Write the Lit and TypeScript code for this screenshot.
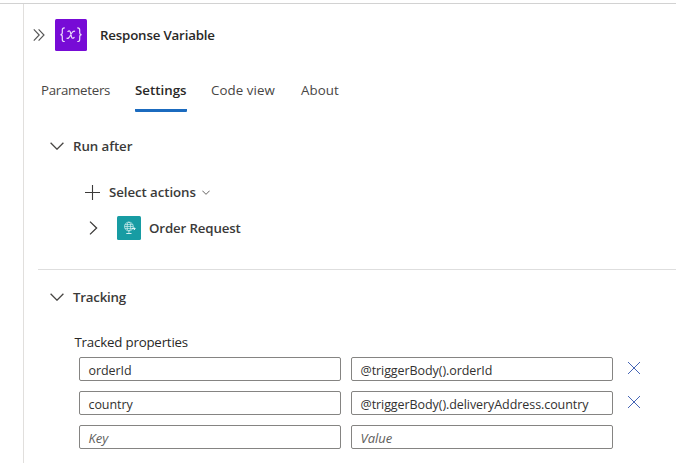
import { LitElement, html, css, svg } from "lit";
import { customElement, property } from "lit/decorators.js";

@customElement("tracked-row")
class TrackedRow extends LitElement {
  @property() key = "";
  @property() value = "";

  static styles = css`
    :host { display: flex; height: 24px; align-items: center; }
    .field {
      box-sizing: border-box; width: 262px; height: 24px; margin-right: 10px;
      border: 1px solid #858482; border-radius: 2px; padding: 3px 8px 0 8.5px;
      line-height: 20px; color: #323130; white-space: nowrap; letter-spacing: -0.07px;
    }
    .hint { font-style: italic; color: #605e5c; font-size: 13px; letter-spacing: 0; padding-top: 2px; }
    .remove { margin: -2px 0 0 4px; display: block; }
  `;

  render() {
    return html`
      <div class="field ${this.key ? "" : "hint"}">${this.key || "Key"}</div>
      <div class="field ${this.value ? "" : "hint"}">${this.value || "Value"}</div>
      ${this.key
        ? html`<svg class="remove" width="14" height="14" viewBox="0 0 14 14">
            <path d="M1 1L13 13M13 1L1 13" stroke="#4565b5" fill="none" />
          </svg>`
        : ""}
    `;
  }
}

const chevronDown = svg`<path d="M.6.8L7 7.2L13.4.8" fill="none" stroke="#484644" stroke-width="1.3"/>`;

@customElement("app-root")
class AppRoot extends LitElement {
  static styles = css`
    :host {
      display: block; box-sizing: border-box; height: 463px; padding-top: 3px; overflow: hidden;
      background: #fff; color: #323130;
      font: 13.3px/20px "Open Sans", "Noto Sans", sans-serif;
    }
    svg { display: block; flex: none; }
    .panel {
      box-sizing: border-box; height: 460px; border-top: 1px solid #d2d2d2;
      display: flex; flex-direction: column;
    }
    .body { flex: 1; margin-left: 23px; border-left: 1px solid #e1dfdd; }
    .header { display: flex; align-items: center; padding: 15px 0 0 9px; height: 32px; }
    .collapse { margin-right: 10px; }
    .header .name { margin-left: 13px; }
    .semi { font-weight: 600; color: #3b3a39; white-space: nowrap; letter-spacing: -0.08px; }
    .semi.name { color: #292827; letter-spacing: -0.18px; }
    .tabs { display: grid; grid-template-columns: 94px 76px 90px 60px; margin: 29px 0 0 17px; height: 32px; }
    .tab { white-space: nowrap; color: #484644; letter-spacing: 0.08px; }
    .tab.params { letter-spacing: -0.28px; }
    .tab.active {
      width: 52px; box-sizing: border-box; font-weight: 600; color: #292827; letter-spacing: 0;
      border-bottom: 3px solid #1b6bbf; border-radius: 1px;
    }
    .section { display: flex; align-items: center; height: 20px; padding-left: 26px; gap: 9px; }
    .run { margin-top: 24px; }
    .select { display: flex; align-items: center; height: 20px; margin: 26px 0 0 61px; }
    .select .semi { margin: 0 6px 0 9px; }
    .action { display: flex; align-items: center; height: 24px; margin: 14px 0 0 65px; }
    .action .semi { letter-spacing: -0.15px; }
    .action .tile { margin: 0 8px 0 19px; }
    .rule { height: 1px; background: #dedede; margin: 29px 0 0 14px; }
    .tracking { margin-top: 17px; }
    .tracking .semi { letter-spacing: -0.22px; }
    .label { margin: 25px 0 5px 50.5px; color: #292827; letter-spacing: -0.2px; }
    .rows { display: flex; flex-direction: column; gap: 10px; padding-left: 55px; font-size: 12.5px; }
  `;

  render() {
    return html`
      <div class="panel">
        <div class="body">
          <div class="header">
            <svg class="collapse" width="12" height="12" viewBox="0 0 12 12">
              <path d="M.8.4L6.2 6L.8 11.6M5.6.4L11 6L5.6 11.6" fill="none" stroke="#555" stroke-width="1.15" />
            </svg>
            <svg width="32" height="32" viewBox="0 0 32 32">
              <rect width="32" height="32" rx="1.5" fill="#770bd6" />
              <g fill="none" stroke="#eadbfa" stroke-width="1.2" stroke-linecap="round">
                <path d="M9.3 8.9Q7.3 8.9 7.3 11V13.6Q7.3 15.7 5.4 15.7Q7.3 15.7 7.3 17.8V20.4Q7.3 22.5 9.3 22.5" />
                <path d="M22.7 8.9Q24.7 8.9 24.7 11V13.6Q24.7 15.7 26.6 15.7Q24.7 15.7 24.7 17.8V20.4Q24.7 22.5 22.7 22.5" />
                <path d="M12.9 12.4Q14.9 11 15.5 13.6L16.5 17.8Q17.1 20.2 19.1 18.5M19.6 12.3Q18.2 11.6 16.4 14.5L14.9 17.3Q13.3 20 12 19.2" />
              </g>
            </svg>
            <span class="semi name">Response Variable</span>
          </div>
          <div class="tabs">
            <div class="tab params">Parameters</div>
            <div class="tab active">Settings</div>
            <div class="tab">Code view</div>
            <div class="tab">About</div>
          </div>
          <div class="section run">
            <svg width="14" height="8" viewBox="0 0 14 8">${chevronDown}</svg>
            <span class="semi">Run after</span>
          </div>
          <div class="select">
            <svg width="15" height="15" viewBox="0 0 15 15">
              <path d="M7.5 0V15M0 7.5H15" stroke="#3b3a39" stroke-width="1.1" />
            </svg>
            <span class="semi">Select actions</span>
            <svg width="8" height="5" viewBox="0 0 14 8">
              <path d="M.6.8L7 7.2L13.4.8" fill="none" stroke="#605e5c" stroke-width="1.7" />
            </svg>
          </div>
          <div class="action">
            <svg width="9" height="14" viewBox="0 0 9 14">
              <path d="M1 .6L7.6 7L1 13.4" fill="none" stroke="#3b3a39" stroke-width="1.3" />
            </svg>
            <svg class="tile" width="24" height="24" viewBox="0 0 24 24">
              <rect width="24" height="24" rx="1.5" fill="#179ca3" />
              <g fill="none" stroke="#d5f0f1" stroke-width=".7">
                <circle cx="11.9" cy="10.5" r="4.4" />
                <ellipse cx="11.9" cy="10.5" rx="1.8" ry="4.4" />
                <path d="M8 8.6H15.8M7.5 10.5H16.3M8 12.4H15.4M11.9 14.9V17" />
                <path d="M9.3 17.5H14.5" stroke-width="1" />
              </g>
              <path d="M14.8 12.6H18M16.8 11.3L18.2 12.7L16.8 14.1" fill="none" stroke="#eefafa" stroke-width="1" />
            </svg>
            <span class="semi">Order Request</span>
          </div>
          <div class="rule"></div>
          <div class="section tracking">
            <svg width="14" height="8" viewBox="0 0 14 8">${chevronDown}</svg>
            <span class="semi">Tracking</span>
          </div>
          <div class="label">Tracked properties</div>
          <div class="rows">
            <tracked-row key="orderId" value="@triggerBody().orderId"></tracked-row>
            <tracked-row key="country" value="@triggerBody().deliveryAddress.country"></tracked-row>
            <tracked-row></tracked-row>
          </div>
        </div>
      </div>
    `;
  }
}
